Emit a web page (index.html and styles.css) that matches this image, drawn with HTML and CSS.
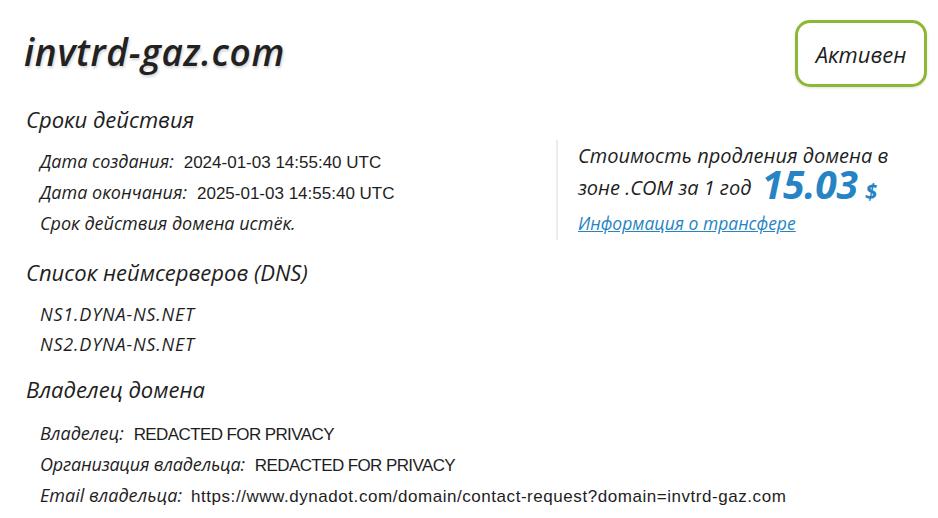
FILE: index.html
```html
<!DOCTYPE html>
<html lang="ru">
<head>
<meta charset="utf-8">
<link rel="stylesheet" href="styles.css">
</head>
<body>
<div class="page">
  <header class="top">
    <h1 class="domain">invtrd-gaz.com</h1>
    <div class="status">Активен</div>
  </header>

  <div class="cols">
    <section class="left">
      <h2 class="sect">Сроки действия</h2>
      <div class="rows">
        <div class="row"><span class="lbl">Дата создания:</span><span class="val">2024-01-03 14:55:40 UTC</span></div>
        <div class="row"><span class="lbl">Дата окончания:</span><span class="val">2025-01-03 14:55:40 UTC</span></div>
        <div class="row"><span class="lbl">Срок действия домена истёк.</span></div>
      </div>
    </section>
    <aside class="price">
      <div class="price-line">Стоимость продления домена в</div>
      <div class="price-line">зоне .COM за 1 год <span class="amount">15.03</span> <span class="cur">$</span></div>
      <a class="transfer" href="#">Информация о трансфере</a>
    </aside>
  </div>

  <section class="block">
    <h2 class="sect">Список неймсерверов (DNS)</h2>
    <div class="rows ns">
      <div class="row"><span class="lbl">NS1.DYNA-NS.NET</span></div>
      <div class="row"><span class="lbl">NS2.DYNA-NS.NET</span></div>
    </div>
  </section>

  <section class="block owner-block">
    <h2 class="sect">Владелец домена</h2>
    <div class="rows owner">
      <div class="row"><span class="lbl">Владелец:</span><span class="val caps">REDACTED FOR PRIVACY</span></div>
      <div class="row"><span class="lbl">Организация владельца:</span><span class="val caps">REDACTED FOR PRIVACY</span></div>
      <div class="row"><span class="lbl">Email владельца:</span><span class="val url">https://www.dynadot.com/domain/contact-request?domain=invtrd-gaz.com</span></div>
    </div>
  </section>
</div>
</body>
</html>
```

FILE: styles.css
```css
* { box-sizing: border-box; }
html, body { margin: 0; padding: 0; background: #fff; }
body {
  font-family: "Open Sans", "Noto Sans", sans-serif;
  color: #1e1e1e;
}
.page {
  width: 938px;
  height: 518px;
  overflow: hidden;
  padding: 20px 11px 0 24px;
}
.top {
  display: flex;
  justify-content: space-between;
  align-items: flex-start;
  height: 67px;
}
.domain {
  margin: 10px 0 0 0;
  font-size: 37px;
  line-height: 44px;
  font-weight: 600;
  font-style: italic;
  color: #222;
  letter-spacing: 0.7px;
  text-shadow: 1px 2px 3px rgba(0,0,0,0.18);
}
.status {
  width: 132px;
  height: 67px;
  border: 3px solid #8cb832;
  border-radius: 15px;
  display: flex;
  align-items: center;
  justify-content: center;
  font-style: italic;
  font-size: 22px;
  color: #1e1e1e;
  box-shadow: 0 1px 3px rgba(0,0,0,0.12);
}
.sect {
  margin: 0;
  font-size: 22px;
  line-height: 30px;
  font-weight: 400;
  font-style: italic;
  color: #1e1e1e;
  padding-left: 2px;
}
.cols {
  display: flex;
  margin-top: 17px;
}
.left {
  width: 532px;
}
.rows {
  padding: 12px 0 0 16px;
}
.row {
  height: 31px;
  line-height: 31px;
  font-size: 18px;
  white-space: nowrap;
}
.lbl {
  font-style: italic;
  color: #1e1e1e;
}
.val {
  font-family: "Liberation Sans", Arial, sans-serif;
  font-size: 17px;
  margin-left: 10px;
  color: #1e1e1e;
}
.val.caps { letter-spacing: -0.6px; }
.owner .row:nth-child(2) .lbl { letter-spacing: -0.2px; }
.val.url { letter-spacing: 0.55px; margin-left: 9px; }
.price {
  margin-top: 36px;
  border-left: 2px solid #ececec;
  padding: 0 0 4px 20px;
  height: 100px;
}
.price-line {
  font-style: italic;
  font-size: 20px;
  height: 32px;
  line-height: 32px;
  color: #1e1e1e;
  white-space: nowrap;
}
.amount {
  font-size: 39px;
  line-height: 0;
  font-weight: 700;
  color: #2684c4;
  letter-spacing: -0.2px;
  margin-left: 5px;
  position: relative;
  top: 4px;
}
.cur {
  font-size: 22px;
  line-height: 0;
  font-weight: 700;
  color: #2684c4;
  margin-left: 2px;
  position: relative;
  top: 4px;
}
.transfer {
  display: block;
  margin-top: 8px;
  font-style: italic;
  font-size: 17.5px;
  line-height: 22px;
  color: #2684c4;
  text-decoration: underline;
}
.block { margin-top: 17px; }
.owner-block { margin-top: 15px; }
.ns { padding-top: 12px; }
.ns .row { height: 30px; line-height: 30px; letter-spacing: 0.8px; }
.owner { padding-top: 14px; }
```
